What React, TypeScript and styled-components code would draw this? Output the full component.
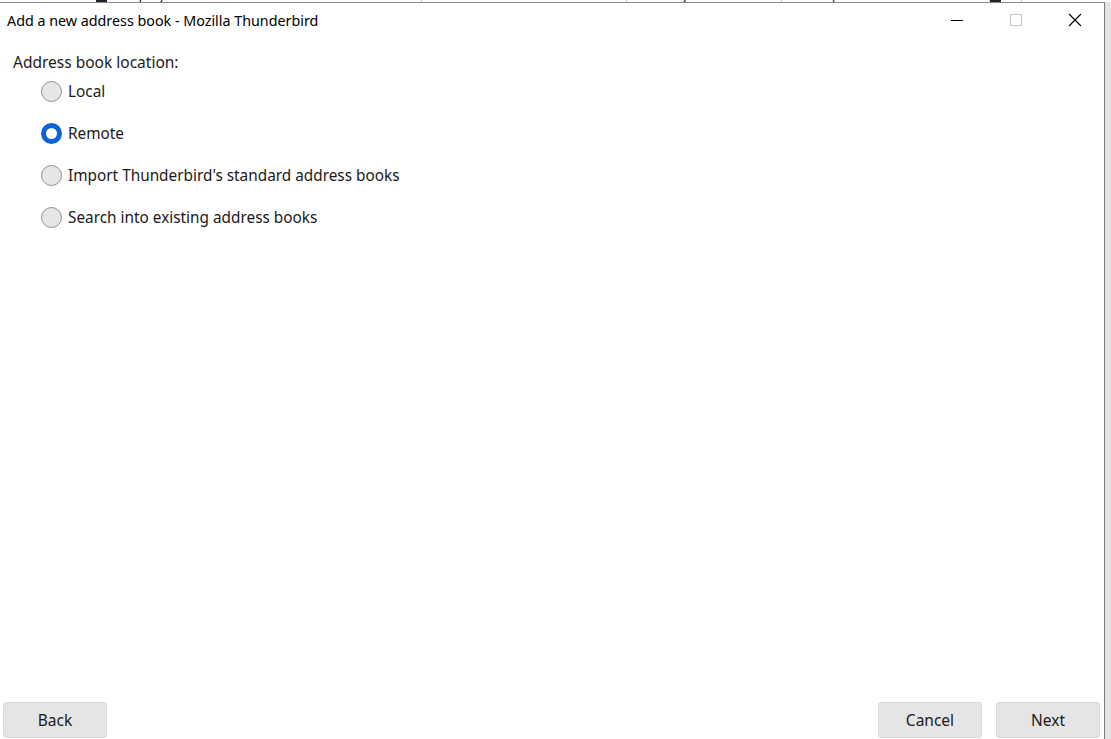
import React from "react";
import styled, { createGlobalStyle } from "styled-components";

const Global = createGlobalStyle`
  html, body { margin: 0; padding: 0; background: #fff; }
  body { font-family: "Noto Sans", "Open Sans", sans-serif; color: #1a1a1a; }
`;

const Desktop = styled.div`
  position: relative;
  width: 1111px;
  height: 739px;
  overflow: hidden;
  background: #d9d9d9;
`;

const BackHeader = styled.div`
  position: absolute;
  left: 0;
  top: -11px;
  width: 1111px;
  height: 13px;
  background: #fff;
  border-bottom: 1px solid #9a9a9a;
  display: flex;
  align-items: flex-end;
  font-size: 14px;
  color: #1e1e1e;
`;

const BackCol = styled.div<{ $w: number; $pad: number }>`
  width: ${(p) => p.$w}px;
  flex: none;
  display: flex;
  align-items: flex-end;
  gap: 11px;
  line-height: 16px;
  white-space: nowrap;
  border-right: 1px solid #cfcfcf;
  padding-left: ${(p) => p.$pad}px;
  box-sizing: border-box;
  overflow: hidden;
`;

const BackIcon = styled.span`
  width: 11px;
  height: 12px;
  background: #222;
  flex: none;
`;

const RightStrip = styled.div`
  position: absolute;
  right: 0;
  top: 2px;
  width: 6px;
  bottom: 0;
  background: #e4e4e4;
  border-left: 1px solid #8e8e8e;
`;

const Window = styled.div`
  position: absolute;
  left: 0;
  top: 2px;
  width: 1105px;
  height: 737px;
  background: #fff;
  border-top: 1px solid #8a8a8a;
  border-right: 1px solid #7a7a7a;
  box-sizing: border-box;
  display: flex;
  flex-direction: column;
`;

const TitleBar = styled.div`
  height: 34px;
  display: flex;
  align-items: center;
  padding-left: 7px;
  flex: none;
`;

const Title = styled.div`
  flex: 1;
  font-size: 14.3px;
  color: #000;
  font-family: "Noto Sans", sans-serif;
`;

const Controls = styled.div`
  display: flex;
  height: 100%;
`;

const ControlBtn = styled.div`
  width: 59px;
  height: 100%;
  display: flex;
  align-items: center;
  justify-content: center;
`;

const Body = styled.div`
  flex: 1;
  padding: 15px 13px 0 13px;
  display: flex;
  flex-direction: column;
`;

const Label = styled.div`
  font-size: 15.5px;
  line-height: 20px;
  color: #1a1a1a;
`;

const RadioList = styled.div`
  display: flex;
  flex-direction: column;
  gap: 20px;
  padding-left: 28px;
  margin-top: 8px;
`;

const RadioRow = styled.label`
  display: flex;
  align-items: center;
  gap: 6px;
  font-size: 15.35px;
  line-height: 22px;
  color: #1a1a1a;
`;

const RadioCircle = styled.span<{ $on?: boolean }>`
  width: 21px;
  height: 21px;
  box-sizing: border-box;
  border-radius: 50%;
  flex: none;
  background: ${(p) => (p.$on ? "#fff" : "#e6e6e6")};
  border: ${(p) => (p.$on ? "5.5px solid #0a64d8" : "1px solid #8f8f8f")};
`;

const Footer = styled.div`
  display: flex;
  align-items: center;
  padding: 0 4px 0 3px;
  height: 38px;
  gap: 14px;
  flex: none;
`;

const Spacer = styled.div`
  flex: 1;
`;

const Button = styled.button`
  width: 104px;
  height: 36px;
  background: #e5e5e5;
  border: 1px solid #dadada;
  border-radius: 3px;
  font-family: "Noto Sans", sans-serif;
  font-size: 15.5px;
  color: #1a1a1a;
  padding: 0;
`;

export default function App() {
  return (
    <>
      <Global />
      <Desktop>
        <BackHeader>
          <BackCol $w={87} $pad={0} />
          <BackCol $w={335} $pad={9}><BackIcon />Display Name</BackCol>
          <BackCol $w={205} $pad={4}>Emails - Phones</BackCol>
          <BackCol $w={155} $pad={6}>Birthday</BackCol>
          <BackCol $w={208} $pad={9}>Last Updated</BackCol>
          <BackCol $w={32} $pad={0}><BackIcon /></BackCol>
        </BackHeader>
        <RightStrip />
        <Window>
          <TitleBar>
            <Title>Add a new address book - Mozilla Thunderbird</Title>
            <Controls>
              <ControlBtn>
                <svg width="12" height="12" viewBox="0 0 12 12">
                  <path d="M0 6.5h12" stroke="#000" strokeWidth="1" />
                </svg>
              </ControlBtn>
              <ControlBtn>
                <svg width="12" height="12" viewBox="0 0 12 12">
                  <rect x="0.5" y="0.5" width="11" height="11" fill="none" stroke="#c6c6c6" strokeWidth="1" />
                </svg>
              </ControlBtn>
              <ControlBtn>
                <svg width="14" height="14" viewBox="0 0 14 14">
                  <path d="M1 1l12 12M13 1L1 13" stroke="#000" strokeWidth="1.1" />
                </svg>
              </ControlBtn>
            </Controls>
          </TitleBar>
          <Body>
            <Label>Address book location:</Label>
            <RadioList>
              <RadioRow><RadioCircle />Local</RadioRow>
              <RadioRow><RadioCircle $on />Remote</RadioRow>
              <RadioRow><RadioCircle />Import Thunderbird's standard address books</RadioRow>
              <RadioRow><RadioCircle />Search into existing address books</RadioRow>
            </RadioList>
          </Body>
          <Footer>
            <Button>Back</Button>
            <Spacer />
            <Button>Cancel</Button>
            <Button>Next</Button>
          </Footer>
        </Window>
      </Desktop>
    </>
  );
}
